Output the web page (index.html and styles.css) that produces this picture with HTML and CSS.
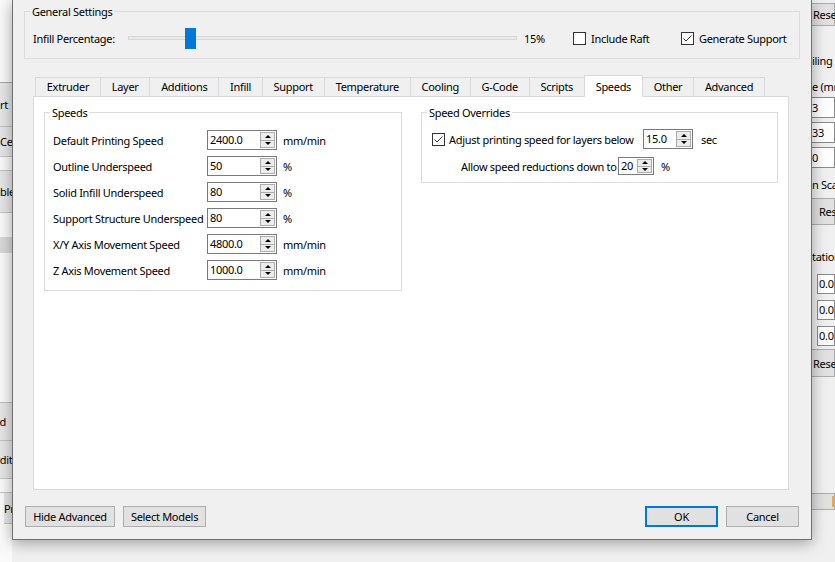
FILE: index.html
```html
<!DOCTYPE html>
<html lang="en">
<head>
  <meta charset="UTF-8" />
  <meta name="viewport" content="width=device-width, initial-scale=1.0"/>
  <title>Slicing Settings</title>
  <link rel="stylesheet" href="styles.css">
</head>
<body>
  <div class="app">
    <div class="app-left">
      <div class="side-blank"></div>
      <div class="side-btn start">Start</div>
      <div class="side-btn center">Center</div>
      <div class="side-gap"></div>
      <div class="side-btn disable">Disable</div>
      <div class="side-gap big"></div>
      <div class="side-bar"></div>
      <div class="side-blank mid"></div>
      <div class="side-btn add">Add</div>
      <div class="side-btn edit">Edit</div>
      <div class="side-gap"></div>
      <div class="side-btn print">Print</div>
    </div>
    <div class="app-right">
      <div class="r-btn r-reset1">Rese</div>
      <div class="r-label r-title">iling</div>
      <div class="r-label r-size">e (mm</div>
      <div class="r-input first">3</div>
      <div class="r-input">33</div>
      <div class="r-input">0</div>
      <div class="r-label r-scale">n Scal</div>
      <div class="r-btn r-reset2">Res</div>
      <div class="r-label r-rot">tation</div>
      <div class="r-input short first">0.0</div>
      <div class="r-input short">0.0</div>
      <div class="r-input short">0.0</div>
      <div class="r-btn r-reset3">Rese</div>
      <div class="r-btn r-print"><span class="r-orange"></span></div>
    </div>
  </div>

  <div class="dialog">
    <fieldset class="group general">
      <legend>General Settings</legend>
      <div class="general-row">
        <span class="infill-label">Infill Percentage:</span>
        <div class="slider"><span class="slider-handle"></span></div>
        <span class="infill-value">15%</span>
        <label class="check raft"><span class="box"></span>Include Raft</label>
        <label class="check"><span class="box checked"><svg viewBox="0 0 11 11"><path d="M1.5 5.5 L4 8 L9.5 2.5"/></svg></span>Generate Support</label>
      </div>
    </fieldset>

    <div class="tabs">
      <div class="tab-bar">
        <div class="tab">Extruder</div>
        <div class="tab">Layer</div>
        <div class="tab">Additions</div>
        <div class="tab">Infill</div>
        <div class="tab">Support</div>
        <div class="tab">Temperature</div>
        <div class="tab">Cooling</div>
        <div class="tab">G-Code</div>
        <div class="tab">Scripts</div>
        <div class="tab active">Speeds</div>
        <div class="tab">Other</div>
        <div class="tab">Advanced</div>
      </div>

      <div class="tab-pane">
        <fieldset class="group inner">
          <legend>Speeds</legend>
          <div class="speed-rows">
            <div class="field-row">
              <span class="field-label">Default Printing Speed</span>
              <div class="spin"><span class="spin-value">2400.0</span><span class="spin-btns"><span class="up"></span><span class="down"></span></span></div>
              <span class="unit">mm/min</span>
            </div>
            <div class="field-row">
              <span class="field-label">Outline Underspeed</span>
              <div class="spin"><span class="spin-value">50</span><span class="spin-btns"><span class="up"></span><span class="down"></span></span></div>
              <span class="unit">%</span>
            </div>
            <div class="field-row">
              <span class="field-label">Solid Infill Underspeed</span>
              <div class="spin"><span class="spin-value">80</span><span class="spin-btns"><span class="up"></span><span class="down"></span></span></div>
              <span class="unit">%</span>
            </div>
            <div class="field-row">
              <span class="field-label">Support Structure Underspeed</span>
              <div class="spin"><span class="spin-value">80</span><span class="spin-btns"><span class="up"></span><span class="down"></span></span></div>
              <span class="unit">%</span>
            </div>
            <div class="field-row">
              <span class="field-label">X/Y Axis Movement Speed</span>
              <div class="spin"><span class="spin-value">4800.0</span><span class="spin-btns"><span class="up"></span><span class="down"></span></span></div>
              <span class="unit">mm/min</span>
            </div>
            <div class="field-row">
              <span class="field-label">Z Axis Movement Speed</span>
              <div class="spin"><span class="spin-value">1000.0</span><span class="spin-btns"><span class="up"></span><span class="down"></span></span></div>
              <span class="unit">mm/min</span>
            </div>
          </div>
        </fieldset>

        <fieldset class="group inner">
          <legend>Speed Overrides</legend>
          <div class="override-rows">
            <div class="field-row">
              <span class="box checked"><svg viewBox="0 0 11 11"><path d="M1.5 5.5 L4 8 L9.5 2.5"/></svg></span>
              <span class="override-label">Adjust printing speed for layers below</span>
              <div class="spin layer-time"><span class="spin-value">15.0</span><span class="spin-btns"><span class="up"></span><span class="down"></span></span></div>
              <span class="unit sec">sec</span>
            </div>
            <div class="field-row small">
              <span class="reduction-label">Allow speed reductions down to</span>
              <div class="spin reduction"><span class="spin-value">20</span><span class="spin-btns"><span class="up"></span><span class="down"></span></span></div>
              <span class="unit pct">%</span>
            </div>
          </div>
        </fieldset>
      </div>
    </div>

    <div class="dialog-buttons">
      <button class="btn hide-adv">Hide Advanced</button>
      <button class="btn select-models">Select Models</button>
      <button class="btn ok">OK</button>
      <button class="btn cancel">Cancel</button>
    </div>
  </div>
</body>
</html>
```

FILE: styles.css
```css
body {
  margin: 0;
  width: 835px;
  height: 562px;
  overflow: hidden;
  position: relative;
  background-color: #f0f0f0;
  font-family: "Noto Sans", sans-serif;
  font-size: 11px;
  letter-spacing: -0.3px;
  color: #000;
}

/* app behind the dialog */

.app {
  display: flex;
  justify-content: space-between;
  height: 562px;
}

.app-left {
  width: 12px;
  overflow: hidden;
  display: flex;
  flex-direction: column;
  background-color: #fafafa;
}

.side-blank {
  height: 82px;
  flex-shrink: 0;
  border-bottom: 1px solid #a8a8a8;
}

.side-blank.mid {
  height: 149px;
  border-bottom: 1px solid #bdbdbd;
}

.side-btn {
  flex-shrink: 0;
  display: flex;
  justify-content: flex-start;
  align-items: center;
  white-space: nowrap;
  background-color: #e6e6e6;
  border-bottom: 1px solid #c4c4c4;
}

.side-btn.start { height: 43px; justify-content: flex-end; padding-right: 4px; }
.side-btn.center { height: 29px; }
.side-btn.disable { height: 41px; margin-left: -21px; }
.side-btn.add { height: 37px; justify-content: flex-end; padding-right: 6px; }
.side-btn.edit { height: 37px; margin-left: -6px; }
.side-btn.print { height: 30px; margin-left: 4px; }

.side-gap {
  height: 13px;
  flex-shrink: 0;
  border-bottom: 1px solid #c4c4c4;
}

.side-gap.big {
  height: 24px;
  border-bottom: none;
}

.side-bar {
  height: 16px;
  flex-shrink: 0;
  background-color: #d9d9d9;
}

.app-right {
  width: 23px;
  overflow: hidden;
  display: flex;
  flex-direction: column;
  background-color: #f0f0f0;
  white-space: nowrap;
}

.r-btn {
  box-sizing: border-box;
  flex-shrink: 0;
  background-color: #e1e1e1;
  border: 1px solid #adadad;
  border-left: none;
  padding-left: 1px;
  display: flex;
  align-items: center;
}

.r-reset1 { margin-top: 3px; height: 23px; }
.r-reset2 { margin-top: 6px; height: 27px; padding-left: 7px; }
.r-reset3 { margin-top: 3px; height: 28px; }
.r-print {
  margin-top: 116px;
  height: 17px;
  justify-content: flex-end;
}

.r-orange {
  width: 2px;
  height: 11px;
  background-color: #f2a640;
}

.r-label {
  flex-shrink: 0;
  line-height: 14px;
  display: flex;
  align-items: center;
}

.r-title { margin-top: 28px; }
.r-title::after {
  content: "";
  flex: 1;
  height: 1px;
  margin-left: 2px;
  background-color: #dcdcdc;
}
.r-size { margin-top: 12px; }
.r-scale { margin-top: 10px; }
.r-rot { margin-top: 25px; }

.r-input {
  box-sizing: border-box;
  flex-shrink: 0;
  height: 21px;
  margin-top: 4px;
  background-color: #fff;
  border: 1px solid #8a8a8a;
  border-left: none;
  line-height: 19px;
}

.r-input.first { margin-top: 3px; }

.r-input.short {
  height: 20px;
  margin-left: 5px;
  margin-top: 6px;
  padding-left: 1px;
  line-height: 18px;
  border-left: 1px solid #8a8a8a;
}

.r-input.short.first { margin-top: 10px; }

/* dialog */

.dialog {
  position: absolute;
  left: 12px;
  top: 0;
  width: 798px;
  height: 539px;
  border: 1px solid #707070;
  border-top: none;
  background-color: #f0f0f0;
  box-shadow: 0 3px 14px rgba(0, 0, 0, 0.35);
  display: flex;
  flex-direction: column;
}

.group {
  margin: 0;
  padding: 0;
  min-width: 0;
  border: 1px solid #dcdcdc;
}

.group legend {
  margin-left: 5px;
  padding: 0 2px;
  line-height: 15px;
}

.general {
  margin: 4px 11px 0 11px;
}

.general-row {
  display: flex;
  align-items: center;
  height: 20px;
  padding: 9px 8px 10px 8px;
}

.infill-label {
  width: 95px;
}

.slider {
  position: relative;
  width: 389px;
  height: 21px;
}

.slider::before {
  content: "";
  position: absolute;
  left: 0;
  right: 0;
  top: 8px;
  height: 2px;
  background-color: #e7eaea;
  border: 1px solid #d6d6d6;
}

.slider-handle {
  position: absolute;
  left: 57px;
  top: 0;
  width: 11px;
  height: 21px;
  background-color: #0078d7;
}

.infill-value {
  width: 49px;
  margin-left: 7px;
}

.check {
  display: flex;
  align-items: center;
}

.check.raft {
  width: 108px;
}

.box {
  width: 13px;
  height: 13px;
  box-sizing: border-box;
  border: 1px solid #333;
  background-color: #fff;
  margin-right: 5px;
  flex-shrink: 0;
  display: flex;
}

.box svg {
  width: 11px;
  height: 11px;
}

.box path {
  fill: none;
  stroke: #333;
  stroke-width: 1;
}

/* tabs */

.tabs {
  flex: 1;
  display: flex;
  flex-direction: column;
  margin: 16px 22px 0 20px;
}

.tab-bar {
  display: flex;
  align-items: flex-end;
  height: 21px;
  padding-left: 2px;
}

.tab {
  box-sizing: border-box;
  height: 19px;
  line-height: 18px;
  padding: 0 10.8px;
  margin-left: -1px;
  white-space: nowrap;
  border: 1px solid #d9d9d9;
  border-bottom: none;
  background-color: #f0f0f0;
}

.tab:first-child {
  margin-left: 0;
}

.tab.active {
  height: 22px;
  line-height: 21px;
  margin-bottom: -1px;
  background-color: #fff;
  position: relative;
  z-index: 1;
}

.tab-pane {
  flex: 1;
  border: 1px solid #d9d9d9;
  background-color: #fff;
  padding: 8px 10px;
  display: grid;
  grid-template-columns: 358px 357px;
  column-gap: 19px;
  align-items: start;
}

.speed-rows {
  display: flex;
  flex-direction: column;
  gap: 6px;
  padding: 10px 8px 10px 8px;
}

.override-rows {
  display: flex;
  flex-direction: column;
  gap: 8px;
  padding: 9px 10px 7px 10px;
}

.field-row {
  display: flex;
  align-items: center;
  height: 20px;
}

.field-row.small {
  height: 18px;
}

.field-label {
  width: 154px;
  white-space: nowrap;
}

.override-label {
  width: 194px;
  margin-left: -1px;
  white-space: nowrap;
}

.reduction-label {
  width: 157px;
  margin-left: 29px;
  white-space: nowrap;
}

.unit {
  margin-left: 6px;
}

.unit.sec {
  margin-left: 8px;
}

.unit.pct {
  margin-left: 7px;
}

/* spin boxes */

.spin {
  box-sizing: border-box;
  width: 70px;
  height: 20px;
  display: flex;
  border: 1px solid #7a7a7a;
  background-color: #fff;
}

.spin.layer-time {
  width: 50px;
}

.spin.reduction {
  width: 36px;
  height: 18px;
}

.spin-value {
  flex: 1;
  padding-left: 2px;
  line-height: 18px;
}

.spin.reduction .spin-value {
  line-height: 16px;
}

.spin-btns {
  width: 13px;
  margin: 1px 1px 1px 0;
  display: flex;
  flex-direction: column;
  border: 1px solid #adadad;
  background-color: #ececec;
}

.spin-btns span {
  flex: 1;
  display: flex;
  align-items: center;
  justify-content: center;
}

.spin-btns .up {
  border-bottom: 1px solid #adadad;
}

.spin-btns .up::before {
  content: "";
  border-left: 3px solid transparent;
  border-right: 3px solid transparent;
  border-bottom: 3px solid #000;
}

.spin-btns .down::before {
  content: "";
  border-left: 3px solid transparent;
  border-right: 3px solid transparent;
  border-top: 3px solid #000;
}

/* bottom buttons */

.dialog-buttons {
  display: flex;
  gap: 8px;
  height: 21px;
  margin: 16px 12px 12px 12px;
}

.btn {
  box-sizing: border-box;
  height: 21px;
  padding: 0;
  font-family: inherit;
  font-size: 11px;
  letter-spacing: inherit;
  color: #000;
  background-color: #e1e1e1;
  border: 1px solid #adadad;
}

.btn.hide-adv { width: 90px; }
.btn.select-models { width: 83px; }
.btn.ok {
  width: 73px;
  margin-left: auto;
  border: 2px solid #0078d7;
}
.btn.cancel { width: 73px; }
```
